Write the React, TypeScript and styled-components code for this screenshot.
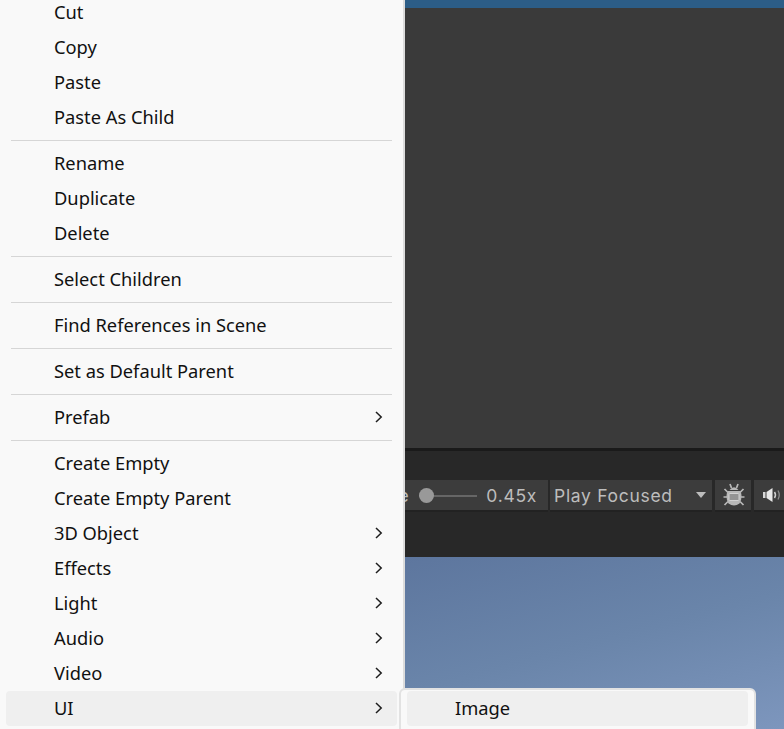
import React from 'react';
import styled, { createGlobalStyle } from 'styled-components';

type MenuEntry = { label?: string; arrow?: boolean; active?: boolean };

const entries: MenuEntry[] = [
  { label: 'Cut' },
  { label: 'Copy' },
  { label: 'Paste' },
  { label: 'Paste As Child' },
  {},
  { label: 'Rename' },
  { label: 'Duplicate' },
  { label: 'Delete' },
  {},
  { label: 'Select Children' },
  {},
  { label: 'Find References in Scene' },
  {},
  { label: 'Set as Default Parent' },
  {},
  { label: 'Prefab', arrow: true },
  {},
  { label: 'Create Empty' },
  { label: 'Create Empty Parent' },
  { label: '3D Object', arrow: true },
  { label: 'Effects', arrow: true },
  { label: 'Light', arrow: true },
  { label: 'Audio', arrow: true },
  { label: 'Video', arrow: true },
  { label: 'UI', arrow: true, active: true },
];

const Chevron: React.FC = () => (
  <svg width="10" height="14" viewBox="0 0 10 14" fill="none">
    <path d="M2 2 L7.2 7 L2 12" stroke="#1e1e1e" strokeWidth="1.5" />
  </svg>
);

const BugIcon: React.FC = () => (
  <svg width="22" height="24" viewBox="0 0 22 24" fill="none">
    <path d="M7 1 L8.5 5 M15 1 L13.5 5 M1.5 6 L5 9.5 M20.5 6 L17 9.5 M0.5 14 L4 14 M21.5 14 L18 14 M1.5 22 L5 18.5 M20.5 22 L17 18.5" stroke="#b8b8b8" strokeWidth="1.7" />
    <path d="M6.5 7 Q11 1.5 15.5 7 Z" fill="#b8b8b8" />
    <path d="M4.5 8 H17.5 Q20 15 16.5 20.5 Q11 24.5 5.5 20.5 Q2 15 4.5 8 Z" fill="#b8b8b8" />
    <rect x="6" y="10.5" width="10" height="7" rx="1" fill="#949494" stroke="#d2d2d2" strokeWidth="1" />
  </svg>
);

const SoundIcon: React.FC = () => (
  <svg width="18" height="14" viewBox="0 0 18 14" fill="none">
    <path d="M0 4 H2.5 V10 H0 Z" fill="#d8d8d8" />
    <path d="M3.5 4 L9.5 0 V14 L3.5 10 Z" fill="#e8e8e8" />
    <path d="M11.5 4 Q13.5 7 11.5 10" stroke="#d0d0d0" strokeWidth="1.5" />
    <path d="M15 2.5 Q17.5 7 15 11.5" stroke="#8c8c8c" strokeWidth="1.3" />
  </svg>
);

const App: React.FC = () => (
  <>
    <GlobalStyle />
    <Screen>
      <Menu>
        {entries.map((entry, index) =>
          entry.label ? (
            <MenuRow key={index} $active={entry.active}>
              <MenuLabel>{entry.label}</MenuLabel>
              {entry.arrow && <Chevron />}
            </MenuRow>
          ) : (
            <Separator key={index} />
          ),
        )}
      </Menu>
      <Editor>
        <TitleStrip />
        <Viewport />
        <GameBar>
          <ScaleGroup>
            <ScaleLabel>Scale</ScaleLabel>
            <Slider>
              <SliderKnob />
            </Slider>
            <ScaleValue>0.45x</ScaleValue>
          </ScaleGroup>
          <PlayDropdown>
            Play Focused
            <DropdownCaret />
          </PlayDropdown>
          <IconButton $width={36} $inset={8}>
            <BugIcon />
          </IconButton>
          <IconButton $width={40} $inset={9}>
            <SoundIcon />
          </IconButton>
        </GameBar>
        <Sky />
      </Editor>
      <SubMenu>
        <SubMenuRow>Image</SubMenuRow>
      </SubMenu>
    </Screen>
  </>
);

const GlobalStyle = createGlobalStyle`
  html, body {
    margin: 0;
    padding: 0;
    background: #3a3a3a;
  }
`;

const Screen = styled.div`
  position: relative;
  display: flex;
  width: 784px;
  height: 729px;
  overflow: hidden;
  font-family: "Noto Sans", "Noto Sans CJK SC", sans-serif;
`;

const Menu = styled.div`
  flex: 0 0 405px;
  box-sizing: border-box;
  height: 729px;
  padding: 0 6px;
  background: #f9f9f9;
  border-right: 2px solid #dcdcdc;
  overflow: hidden;
`;

const MenuRow = styled.div<{ $active?: boolean }>`
  display: flex;
  align-items: center;
  justify-content: space-between;
  box-sizing: border-box;
  height: 35px;
  padding: 0 13px 0 48px;
  border-radius: 4px;
  font-size: 18.3px;
  color: #111;
  background: ${(p) => (p.$active ? '#efefef' : 'transparent')};

  &:first-child {
    margin-top: -5.5px;
  }
`;

const MenuLabel = styled.span`
  margin-bottom: 2px;
`;

const Separator = styled.div`
  box-sizing: border-box;
  height: 11px;
  margin: 0 5px;
  padding-top: 5px;

  &::after {
    content: '';
    display: block;
    height: 1px;
    background: #d6d6d6;
  }
`;

const Editor = styled.div`
  flex: 1;
  min-width: 0;
  display: flex;
  flex-direction: column;
  overflow: hidden;
`;

const TitleStrip = styled.div`
  height: 8px;
  background: #2c5d87;
`;

const Viewport = styled.div`
  height: 440px;
  background: #3a3a3a;
`;

const GameBar = styled.div`
  display: flex;
  align-items: flex-start;
  gap: 2px;
  box-sizing: border-box;
  height: 109px;
  padding-top: 29px;
  background: #282828;
  border-top: 3px solid #1a1a1a;
`;

const ScaleGroup = styled.div`
  flex: 0 0 143px;
  display: flex;
  align-items: center;
  justify-content: flex-end;
  height: 30px;
  padding-right: 11px;
  box-sizing: border-box;
  background: #3c3c3c;
  overflow: hidden;
  box-shadow: 0 2px 0 #222;
`;

const ScaleLabel = styled.span`
  flex: none;
  margin-right: 10px;
  font-family: Inter, sans-serif;
  font-size: 17.5px;
  letter-spacing: 0.7px;
  color: #bdbdbd;
`;

const Slider = styled.div`
  position: relative;
  flex: none;
  width: 58px;
  height: 2px;
  margin: 2px 9px 0 0;
  background: #666;
`;

const SliderKnob = styled.div`
  position: absolute;
  left: 0;
  top: -7px;
  width: 15px;
  height: 15px;
  border-radius: 50%;
  background: #999;
`;

const ScaleValue = styled.span`
  flex: none;
  font-family: Inter, sans-serif;
  font-size: 17.5px;
  letter-spacing: 0.7px;
  color: #bdbdbd;
`;

const PlayDropdown = styled.div`
  flex: 0 0 162px;
  display: flex;
  align-items: center;
  justify-content: space-between;
  box-sizing: border-box;
  height: 30px;
  padding: 0 6px 0 4px;
  background: #3c3c3c;
  font-family: Inter, sans-serif;
  font-size: 17.5px;
  letter-spacing: 0.7px;
  color: #bdbdbd;
  box-shadow: 0 2px 0 #222;
`;

const DropdownCaret = styled.span`
  width: 0;
  height: 0;
  border-left: 5px solid transparent;
  border-right: 5px solid transparent;
  border-top: 6px solid #bdbdbd;
`;

const IconButton = styled.div<{ $width: number; $inset: number }>`
  flex: 0 0 ${(p) => p.$width}px;
  display: flex;
  align-items: center;
  justify-content: flex-start;
  margin-left: 1px;
  padding-left: ${(p) => p.$inset}px;
  box-sizing: border-box;
  height: 30px;
  background: #3c3c3c;
  box-shadow: 0 2px 0 #222;
`;

const Sky = styled.div`
  flex: 1;
  background: linear-gradient(165deg, #5d769e 0%, #6a85aa 50%, #7d96bd 100%);
`;

const SubMenu = styled.div`
  position: absolute;
  left: 399px;
  top: 688px;
  width: 357px;
  height: 60px;
  box-sizing: border-box;
  padding: 1px 6px;
  background: #f9f9f9;
  border: 2px solid #e2e2e2;
  border-radius: 6px;
`;

const SubMenuRow = styled.div`
  display: flex;
  align-items: center;
  box-sizing: border-box;
  height: 35px;
  padding: 0 0 2px 48px;
  border-radius: 4px;
  background: #efefef;
  font-size: 18.3px;
  color: #111;
`;

export default App;
